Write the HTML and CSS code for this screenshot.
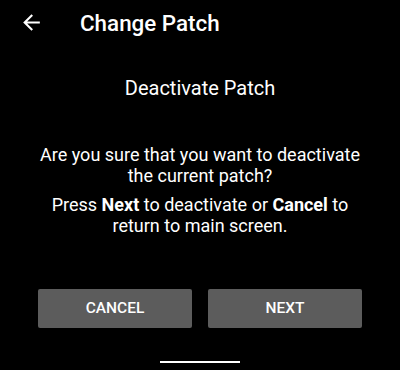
FILE: index.html
```html
<!DOCTYPE html>
<html lang="en">
<head>
    <meta charset="UTF-8">
    <meta name="viewport" content="width=device-width, initial-scale=1.0">
    <title>Change Patch</title>
    <link rel="stylesheet" href="styles.css">
</head>
<body>
    <div class="man-hinh">
        <div class="thanh-tieu-de">
            <button class="nut-quay-lai">
                <svg viewBox="0 0 24 24">
                    <path d="M20 11H7.83l5.59-5.59L12 4l-8 8 8 8 1.41-1.41L7.83 13H20v-2z" fill="#fff"/>
                </svg>
            </button>
            <h1 class="tieu-de">Change Patch</h1>
        </div>

        <div class="noi-dung">
            <h2 class="tieu-de-phu">Deactivate Patch</h2>
            <p class="cau-hoi">Are you sure that you want to deactivate the current patch?</p>
            <p class="huong-dan">Press <b>Next</b> to deactivate or <b>Cancel</b> to return to main screen.</p>
        </div>

        <div class="hang-nut">
            <button class="nut">Cancel</button>
            <button class="nut">Next</button>
        </div>

        <div class="thanh-home"></div>
    </div>
</body>
</html>
```

FILE: styles.css
```css
*{
    box-sizing: border-box;
    padding: 0;
    margin: 0;
}
body{
    background-color: #000;
    color: #fff;
    font-family: Roboto, "Noto Sans", sans-serif;
}
.man-hinh{
    width: 400px;
    height: 370px;
    display: flex;
    flex-direction: column;
}
/* thanh tiêu đề */
.thanh-tieu-de{
    display: flex;
    align-items: flex-start;
    height: 44px;
}
.nut-quay-lai{
    background: none;
    border: none;
    margin-left: 19px;
    margin-top: 9.5px;
    width: 25px;
    height: 25px;
}
.nut-quay-lai svg{
    display: block;
    width: 25px;
    height: 25px;
}
.tieu-de{
    margin-left: 36px;
    margin-top: 10.3px;
    font-size: 22.4px;
    line-height: 26px;
    font-weight: 500;
}
/* nội dung */
.noi-dung{
    text-align: center;
    padding: 0 40px;
}
.tieu-de-phu{
    margin-top: 32px;
    font-size: 20px;
    font-weight: 400;
    line-height: 24px;
}
.cau-hoi, .huong-dan{
    font-size: 18px;
    line-height: 21px;
}
.cau-hoi{
    margin-top: 44px;
}
.huong-dan{
    margin-top: 8px;
}
/* nút */
.hang-nut{
    display: flex;
    gap: 16px;
    padding: 0 38px;
    margin-top: 52.6px;
}
.nut{
    flex: 1;
    height: 39px;
    border: none;
    border-radius: 2px;
    background-color: #5c5c5c;
    color: #fff;
    font-family: Roboto, "Noto Sans", sans-serif;
    font-size: 15.5px;
    font-weight: 500;
    text-transform: uppercase;
}
.thanh-home{
    width: 80px;
    height: 2px;
    background-color: #fff;
    margin: 33px auto 0;
}
```
